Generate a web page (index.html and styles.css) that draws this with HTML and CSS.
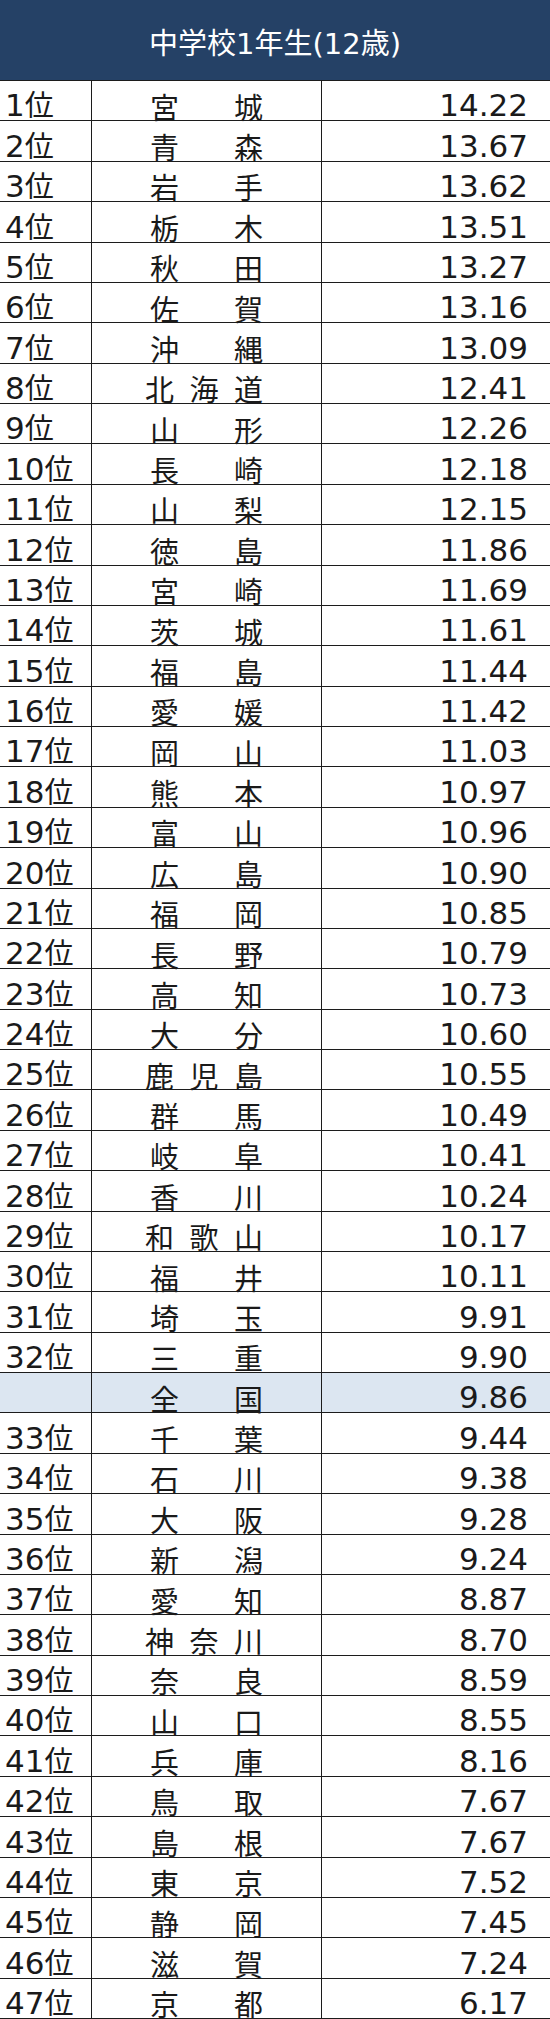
FILE: index.html
```html
<!DOCTYPE html>
<html lang="ja">
<head>
<meta charset="utf-8">
<title>中学校1年生(12歳)</title>
<link rel="stylesheet" href="styles.css">
</head>
<body>
<div class="table">
  <div class="head">中学校1年生(12歳)</div>
  <div class="row"><div class="rank">1<span class="u">位</span></div><div class="name"><span>宮</span><span>城</span></div><div class="val">14.22</div></div>
  <div class="row"><div class="rank">2<span class="u">位</span></div><div class="name"><span>青</span><span>森</span></div><div class="val">13.67</div></div>
  <div class="row"><div class="rank">3<span class="u">位</span></div><div class="name"><span>岩</span><span>手</span></div><div class="val">13.62</div></div>
  <div class="row"><div class="rank">4<span class="u">位</span></div><div class="name"><span>栃</span><span>木</span></div><div class="val">13.51</div></div>
  <div class="row"><div class="rank">5<span class="u">位</span></div><div class="name"><span>秋</span><span>田</span></div><div class="val">13.27</div></div>
  <div class="row"><div class="rank">6<span class="u">位</span></div><div class="name"><span>佐</span><span>賀</span></div><div class="val">13.16</div></div>
  <div class="row"><div class="rank">7<span class="u">位</span></div><div class="name"><span>沖</span><span>縄</span></div><div class="val">13.09</div></div>
  <div class="row"><div class="rank">8<span class="u">位</span></div><div class="name three"><span>北</span><span>海</span><span>道</span></div><div class="val">12.41</div></div>
  <div class="row"><div class="rank">9<span class="u">位</span></div><div class="name"><span>山</span><span>形</span></div><div class="val">12.26</div></div>
  <div class="row"><div class="rank">10<span class="u">位</span></div><div class="name"><span>長</span><span>崎</span></div><div class="val">12.18</div></div>
  <div class="row"><div class="rank">11<span class="u">位</span></div><div class="name"><span>山</span><span>梨</span></div><div class="val">12.15</div></div>
  <div class="row"><div class="rank">12<span class="u">位</span></div><div class="name"><span>徳</span><span>島</span></div><div class="val">11.86</div></div>
  <div class="row"><div class="rank">13<span class="u">位</span></div><div class="name"><span>宮</span><span>崎</span></div><div class="val">11.69</div></div>
  <div class="row"><div class="rank">14<span class="u">位</span></div><div class="name"><span>茨</span><span>城</span></div><div class="val">11.61</div></div>
  <div class="row"><div class="rank">15<span class="u">位</span></div><div class="name"><span>福</span><span>島</span></div><div class="val">11.44</div></div>
  <div class="row"><div class="rank">16<span class="u">位</span></div><div class="name"><span>愛</span><span>媛</span></div><div class="val">11.42</div></div>
  <div class="row"><div class="rank">17<span class="u">位</span></div><div class="name"><span>岡</span><span>山</span></div><div class="val">11.03</div></div>
  <div class="row"><div class="rank">18<span class="u">位</span></div><div class="name"><span>熊</span><span>本</span></div><div class="val">10.97</div></div>
  <div class="row"><div class="rank">19<span class="u">位</span></div><div class="name"><span>富</span><span>山</span></div><div class="val">10.96</div></div>
  <div class="row"><div class="rank">20<span class="u">位</span></div><div class="name"><span>広</span><span>島</span></div><div class="val">10.90</div></div>
  <div class="row"><div class="rank">21<span class="u">位</span></div><div class="name"><span>福</span><span>岡</span></div><div class="val">10.85</div></div>
  <div class="row"><div class="rank">22<span class="u">位</span></div><div class="name"><span>長</span><span>野</span></div><div class="val">10.79</div></div>
  <div class="row"><div class="rank">23<span class="u">位</span></div><div class="name"><span>高</span><span>知</span></div><div class="val">10.73</div></div>
  <div class="row"><div class="rank">24<span class="u">位</span></div><div class="name"><span>大</span><span>分</span></div><div class="val">10.60</div></div>
  <div class="row"><div class="rank">25<span class="u">位</span></div><div class="name three"><span>鹿</span><span>児</span><span>島</span></div><div class="val">10.55</div></div>
  <div class="row"><div class="rank">26<span class="u">位</span></div><div class="name"><span>群</span><span>馬</span></div><div class="val">10.49</div></div>
  <div class="row"><div class="rank">27<span class="u">位</span></div><div class="name"><span>岐</span><span>阜</span></div><div class="val">10.41</div></div>
  <div class="row"><div class="rank">28<span class="u">位</span></div><div class="name"><span>香</span><span>川</span></div><div class="val">10.24</div></div>
  <div class="row"><div class="rank">29<span class="u">位</span></div><div class="name three"><span>和</span><span>歌</span><span>山</span></div><div class="val">10.17</div></div>
  <div class="row"><div class="rank">30<span class="u">位</span></div><div class="name"><span>福</span><span>井</span></div><div class="val">10.11</div></div>
  <div class="row"><div class="rank">31<span class="u">位</span></div><div class="name"><span>埼</span><span>玉</span></div><div class="val">9.91</div></div>
  <div class="row"><div class="rank">32<span class="u">位</span></div><div class="name"><span>三</span><span>重</span></div><div class="val">9.90</div></div>
  <div class="row national"><div class="rank"></div><div class="name"><span>全</span><span>国</span></div><div class="val">9.86</div></div>
  <div class="row"><div class="rank">33<span class="u">位</span></div><div class="name"><span>千</span><span>葉</span></div><div class="val">9.44</div></div>
  <div class="row"><div class="rank">34<span class="u">位</span></div><div class="name"><span>石</span><span>川</span></div><div class="val">9.38</div></div>
  <div class="row"><div class="rank">35<span class="u">位</span></div><div class="name"><span>大</span><span>阪</span></div><div class="val">9.28</div></div>
  <div class="row"><div class="rank">36<span class="u">位</span></div><div class="name"><span>新</span><span>潟</span></div><div class="val">9.24</div></div>
  <div class="row"><div class="rank">37<span class="u">位</span></div><div class="name"><span>愛</span><span>知</span></div><div class="val">8.87</div></div>
  <div class="row"><div class="rank">38<span class="u">位</span></div><div class="name three"><span>神</span><span>奈</span><span>川</span></div><div class="val">8.70</div></div>
  <div class="row"><div class="rank">39<span class="u">位</span></div><div class="name"><span>奈</span><span>良</span></div><div class="val">8.59</div></div>
  <div class="row"><div class="rank">40<span class="u">位</span></div><div class="name"><span>山</span><span>口</span></div><div class="val">8.55</div></div>
  <div class="row"><div class="rank">41<span class="u">位</span></div><div class="name"><span>兵</span><span>庫</span></div><div class="val">8.16</div></div>
  <div class="row"><div class="rank">42<span class="u">位</span></div><div class="name"><span>鳥</span><span>取</span></div><div class="val">7.67</div></div>
  <div class="row"><div class="rank">43<span class="u">位</span></div><div class="name"><span>島</span><span>根</span></div><div class="val">7.67</div></div>
  <div class="row"><div class="rank">44<span class="u">位</span></div><div class="name"><span>東</span><span>京</span></div><div class="val">7.52</div></div>
  <div class="row"><div class="rank">45<span class="u">位</span></div><div class="name"><span>静</span><span>岡</span></div><div class="val">7.45</div></div>
  <div class="row"><div class="rank">46<span class="u">位</span></div><div class="name"><span>滋</span><span>賀</span></div><div class="val">7.24</div></div>
  <div class="row"><div class="rank">47<span class="u">位</span></div><div class="name"><span>京</span><span>都</span></div><div class="val">6.17</div></div>
</div>
</body>
</html>
```

FILE: styles.css
```css
html, body {
  margin: 0;
  padding: 0;
  background: #ffffff;
}

body {
  width: 550px;
  font-family: "DejaVu Sans", "Noto Sans CJK JP", sans-serif;
  color: #1a1a1a;
}

.table {
  display: flex;
  flex-direction: column;
}

.head {
  box-sizing: border-box;
  height: 81px;
  background: #254166;
  color: #ffffff;
  font-size: 29px;
  line-height: 1;
  display: flex;
  align-items: center;
  justify-content: center;
  padding-top: 9px;
  border-bottom: 1px solid #1c1c1c;
}

.row {
  box-sizing: border-box;
  height: 40.375px;
  display: grid;
  grid-template-columns: 92px 230px 1fr;
  border-bottom: 1px solid #1c1c1c;
  align-items: stretch;
}

.row.national {
  background: #dce6f1;
}

.rank, .name, .val {
  display: flex;
  align-items: flex-end;
  line-height: 0.9;
  padding-bottom: 0;
}

.rank {
  border-right: 1px solid #1c1c1c;
  font-size: 31px;
  padding-left: 5px;
  align-items: baseline;
  align-content: flex-end;
  flex-wrap: wrap;
}

.rank .u {
  font-family: "Noto Sans CJK JP", sans-serif;
  font-size: 29px;
}

.name {
  border-right: 1px solid #1c1c1c;
  font-family: "Noto Sans CJK JP", sans-serif;
  font-size: 29px;
  line-height: 0.92;
  justify-content: space-between;
  padding-left: 58px;
  padding-right: 58px;
  padding-bottom: 1px;
}

.name.three {
  padding-left: 53px;
  padding-right: 58px;
}

.val {
  font-size: 31px;
  justify-content: flex-end;
  padding-right: 22px;
}
```
